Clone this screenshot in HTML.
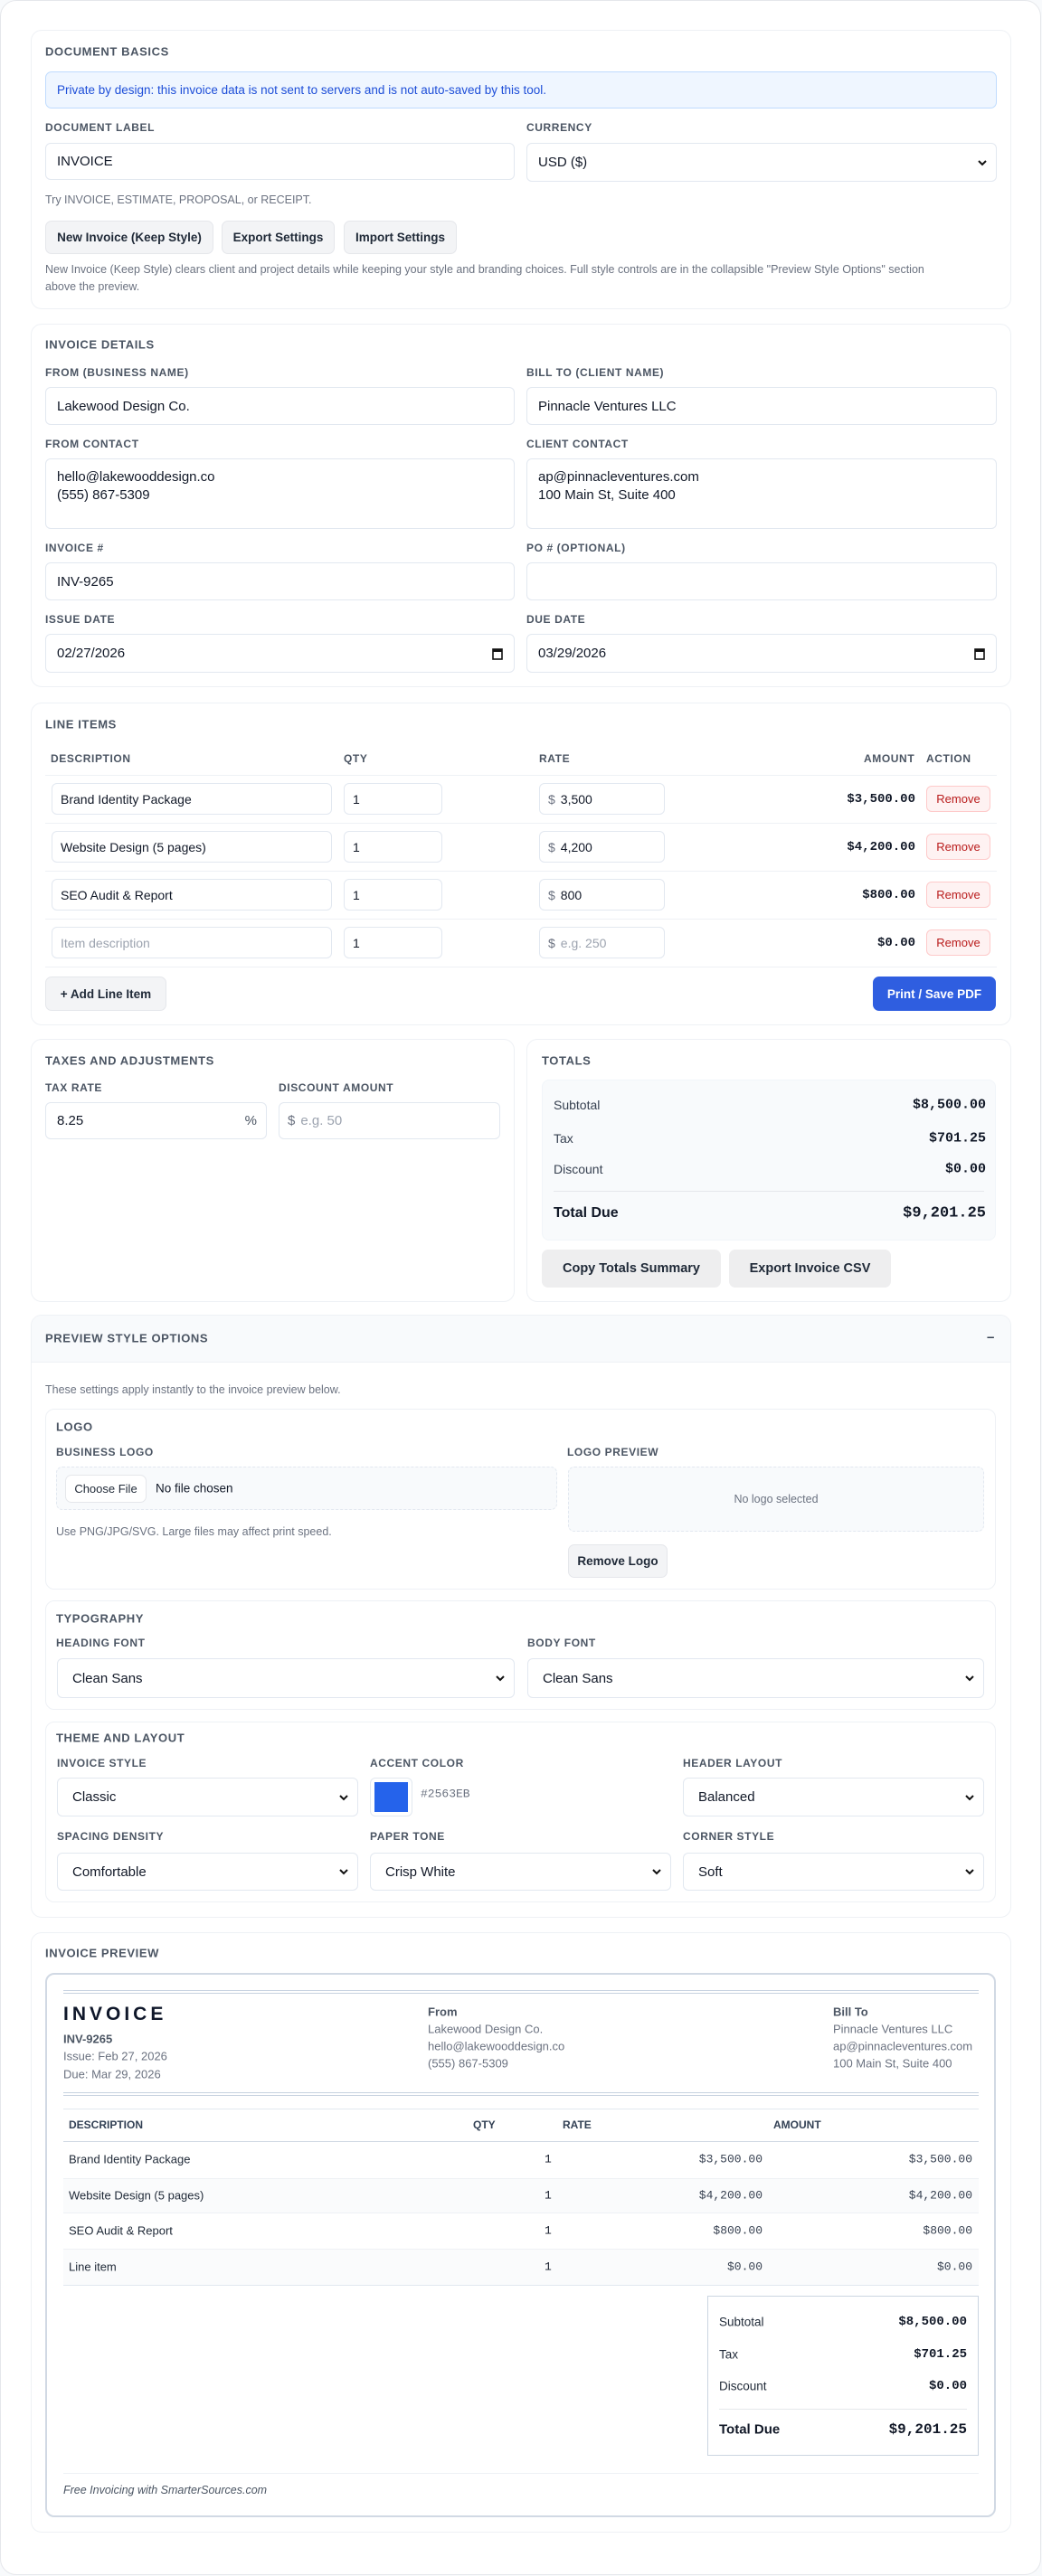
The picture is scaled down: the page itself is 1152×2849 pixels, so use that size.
<!DOCTYPE html>
<html><head><meta charset="utf-8">
<style>
*{box-sizing:border-box}
body{margin:0;width:1152px;height:2849px;background:#f8fafc;font-family:"Liberation Sans",sans-serif;color:#111827;position:relative;overflow:hidden}
.outer{position:absolute;left:0;top:0;width:1151px;height:2848px;background:#fff;border:1px solid #e5e7eb;border-radius:18px}
.card{position:absolute;border:1px solid #eef1f5;border-radius:12px;background:#fff}
.t{position:absolute;font-size:12px;font-weight:700;letter-spacing:.6px;color:#4b5563;transform:translateY(-50%);white-space:nowrap;text-transform:uppercase}
.h{font-size:13px}
.p{position:absolute;font-size:12.5px;color:#6b7280;transform:translateY(-50%);white-space:nowrap}
.in{position:absolute;border:1px solid #e2e8f0;border-radius:6px;display:flex;align-items:center;padding-left:12px;font-size:15px;color:#111827;background:#fff;white-space:nowrap}
.ph{color:#9ca3af}
.btn{position:absolute;border:1px solid #e5e7eb;border-radius:7px;background:#f3f4f6;display:flex;align-items:center;justify-content:center;font-size:13.5px;font-weight:700;color:#1f2937;white-space:nowrap}
.chev{position:absolute;right:10px;top:50%;margin-top:-4px}
.line{position:absolute;height:1px;background:#eef1f5}
.mono{font-family:"Liberation Mono",monospace;font-weight:700}
.r{text-align:right}
.rm{position:absolute;left:1024px;width:71px;height:29px;border:1px solid #fecaca;background:#fef2f2;border-radius:6px;color:#b91c1c;font-size:13px;display:flex;align-items:center;justify-content:center}
.amt{position:absolute;right:140px;font-size:14px;transform:translateY(-50%)}
.dol{color:#6b7280;margin-right:6px}
.tx{position:absolute;transform:translateY(-50%);white-space:nowrap}
</style></head><body>
<div class="outer"></div>

<!-- DOCUMENT BASICS -->
<div class="card" style="left:34px;top:33px;width:1084px;height:309px"></div>
<div class="t h" style="left:50px;top:57px">Document Basics</div>
<div class="a" style="position:absolute;left:50px;top:79px;width:1052px;height:41px;background:#eff6ff;border:1px solid #bfdbfe;border-radius:7px;display:flex;align-items:center;padding-left:12px;font-size:13.5px;color:#1d4ed8">Private by design: this invoice data is not sent to servers and is not auto-saved by this tool.</div>
<div class="t" style="left:50px;top:141px">Document Label</div>
<div class="t" style="left:582px;top:141px">Currency</div>
<div class="in" style="left:50px;top:158px;width:519px;height:41px">INVOICE</div>
<div class="in" style="left:582px;top:158px;width:520px;height:43px">USD ($)<svg class="chev" width="10" height="8" viewBox="0 0 10 8"><path d="M1 2l4 4 4-4" fill="none" stroke="#111" stroke-width="2"/></svg></div>
<div class="p" style="left:50px;top:221px">Try INVOICE, ESTIMATE, PROPOSAL, or RECEIPT.</div>
<div class="btn" style="left:50px;top:244px;width:186px;height:37px">New Invoice (Keep Style)</div>
<div class="btn" style="left:245px;top:244px;width:125px;height:37px">Export Settings</div>
<div class="btn" style="left:380px;top:244px;width:125px;height:37px">Import Settings</div>
<div class="p" style="left:50px;top:298px">New Invoice (Keep Style) clears client and project details while keeping your style and branding choices. Full style controls are in the collapsible "Preview Style Options" section</div>
<div class="p" style="left:50px;top:317px">above the preview.</div>

<!-- INVOICE DETAILS -->
<div class="card" style="left:34px;top:358px;width:1084px;height:402px"></div>
<div class="t h" style="left:50px;top:381px">Invoice Details</div>
<div class="t" style="left:50px;top:412px">From (Business Name)</div>
<div class="t" style="left:582px;top:412px">Bill To (Client Name)</div>
<div class="in" style="left:50px;top:428px;width:519px;height:42px">Lakewood Design Co.</div>
<div class="in" style="left:582px;top:428px;width:520px;height:42px">Pinnacle Ventures LLC</div>
<div class="t" style="left:50px;top:491px">From Contact</div>
<div class="t" style="left:582px;top:491px">Client Contact</div>
<div class="in" style="left:50px;top:507px;width:519px;height:78px;align-items:flex-start;padding-top:10px;line-height:20px;white-space:pre">hello@lakewooddesign.co
(555) 867-5309</div>
<div class="in" style="left:582px;top:507px;width:520px;height:78px;align-items:flex-start;padding-top:10px;line-height:20px;white-space:pre">ap@pinnacleventures.com
100 Main St, Suite 400</div>
<div class="t" style="left:50px;top:606px">Invoice #</div>
<div class="t" style="left:582px;top:606px">PO # (Optional)</div>
<div class="in" style="left:50px;top:622px;width:519px;height:42px">INV-9265</div>
<div class="in" style="left:582px;top:622px;width:520px;height:42px"></div>
<div class="t" style="left:50px;top:685px">Issue Date</div>
<div class="t" style="left:582px;top:685px">Due Date</div>
<div class="in" style="left:50px;top:701px;width:519px;height:43px">02/27/2026<svg class="chev" style="margin-top:-7px;right:12px" width="12" height="14" viewBox="0 0 12 14"><rect x="1" y="2" width="10" height="11" fill="none" stroke="#111" stroke-width="1.6"/><rect x="1" y="2" width="10" height="3" fill="#111"/></svg></div>
<div class="in" style="left:582px;top:701px;width:520px;height:43px">03/29/2026<svg class="chev" style="margin-top:-7px;right:12px" width="12" height="14" viewBox="0 0 12 14"><rect x="1" y="2" width="10" height="11" fill="none" stroke="#111" stroke-width="1.6"/><rect x="1" y="2" width="10" height="3" fill="#111"/></svg></div>

<!-- LINE ITEMS -->
<div class="card" style="left:34px;top:777px;width:1084px;height:357px"></div>
<div class="t h" style="left:50px;top:801px">Line Items</div>
<div class="t" style="left:56px;top:839px">Description</div>
<div class="t" style="left:380px;top:839px">Qty</div>
<div class="t" style="left:596px;top:839px">Rate</div>
<div class="t" style="left:955px;top:839px">Amount</div>
<div class="t" style="left:1024px;top:839px">Action</div>
<div class="line" style="left:50px;top:857px;width:1052px"></div>

<div class="in" style="left:57px;top:866px;width:310px;height:35px;padding-left:9px;font-size:14px">Brand Identity Package</div>
<div class="in" style="left:380px;top:866px;width:109px;height:35px;padding-left:9px;font-size:14px">1</div>
<div class="in" style="left:596px;top:866px;width:139px;height:35px;padding-left:9px;font-size:14px"><span class="dol">$</span>3,500</div>
<div class="amt mono" style="top:884px">$3,500.00</div>
<div class="rm" style="top:869px">Remove</div>
<div class="line" style="left:50px;top:910px;width:1052px"></div>

<div class="in" style="left:57px;top:919px;width:310px;height:35px;padding-left:9px;font-size:14px">Website Design (5 pages)</div>
<div class="in" style="left:380px;top:919px;width:109px;height:35px;padding-left:9px;font-size:14px">1</div>
<div class="in" style="left:596px;top:919px;width:139px;height:35px;padding-left:9px;font-size:14px"><span class="dol">$</span>4,200</div>
<div class="amt mono" style="top:937px">$4,200.00</div>
<div class="rm" style="top:922px">Remove</div>
<div class="line" style="left:50px;top:963px;width:1052px"></div>

<div class="in" style="left:57px;top:972px;width:310px;height:35px;padding-left:9px;font-size:14px">SEO Audit &amp; Report</div>
<div class="in" style="left:380px;top:972px;width:109px;height:35px;padding-left:9px;font-size:14px">1</div>
<div class="in" style="left:596px;top:972px;width:139px;height:35px;padding-left:9px;font-size:14px"><span class="dol">$</span>800</div>
<div class="amt mono" style="top:990px">$800.00</div>
<div class="rm" style="top:975px">Remove</div>
<div class="line" style="left:50px;top:1016px;width:1052px"></div>

<div class="in" style="left:57px;top:1025px;width:310px;height:35px;padding-left:9px;font-size:14px"><span class="ph">Item description</span></div>
<div class="in" style="left:380px;top:1025px;width:109px;height:35px;padding-left:9px;font-size:14px">1</div>
<div class="in" style="left:596px;top:1025px;width:139px;height:35px;padding-left:9px;font-size:14px"><span class="dol">$</span><span class="ph">e.g. 250</span></div>
<div class="amt mono" style="top:1043px">$0.00</div>
<div class="rm" style="top:1028px">Remove</div>
<div class="line" style="left:50px;top:1069px;width:1052px"></div>

<div class="btn" style="left:50px;top:1080px;width:134px;height:38px;font-weight:600">+ Add Line Item</div>
<div class="btn" style="left:965px;top:1080px;width:136px;height:38px;background:#2f5ee0;border-color:#2f5ee0;color:#fff">Print / Save PDF</div>

<!-- TAXES -->
<div class="card" style="left:34px;top:1149px;width:535px;height:291px"></div>
<div class="t h" style="left:50px;top:1173px">Taxes and Adjustments</div>
<div class="t" style="left:50px;top:1203px">Tax Rate</div>
<div class="t" style="left:308px;top:1203px">Discount Amount</div>
<div class="in" style="left:50px;top:1219px;width:245px;height:41px">8.25<span style="position:absolute;right:10px;color:#4b5563">%</span></div>
<div class="in" style="left:308px;top:1219px;width:245px;height:41px;padding-left:9px"><span class="dol">$</span><span class="ph">e.g. 50</span></div>

<!-- TOTALS -->
<div class="card" style="left:582px;top:1149px;width:536px;height:291px"></div>
<div class="t h" style="left:599px;top:1173px">Totals</div>
<div style="position:absolute;left:599px;top:1194px;width:502px;height:178px;background:#f8fafc;border:1px solid #f1f5f9;border-radius:8px"></div>
<div class="tx" style="left:612px;top:1222px;font-size:14px;color:#374151">Subtotal</div>
<div class="tx mono" style="right:62px;top:1222px;font-size:15px">$8,500.00</div>
<div class="tx" style="left:612px;top:1259px;font-size:14px;color:#374151">Tax</div>
<div class="tx mono" style="right:62px;top:1259px;font-size:15px">$701.25</div>
<div class="tx" style="left:612px;top:1293px;font-size:14px;color:#374151">Discount</div>
<div class="tx mono" style="right:62px;top:1293px;font-size:15px">$0.00</div>
<div class="line" style="left:612px;top:1317px;width:476px;background:#e5e7eb"></div>
<div class="tx" style="left:612px;top:1342px;font-size:16px;font-weight:700">Total Due</div>
<div class="tx mono" style="right:62px;top:1342px;font-size:17px">$9,201.25</div>
<div class="btn" style="left:599px;top:1382px;width:198px;height:42px;background:#eeeeef;border:none;font-size:14.5px">Copy Totals Summary</div>
<div class="btn" style="left:806px;top:1382px;width:179px;height:42px;background:#eeeeef;border:none;font-size:14.5px">Export Invoice CSV</div>

<!-- PREVIEW STYLE OPTIONS -->
<div class="card" style="left:34px;top:1454px;width:1084px;height:667px;overflow:hidden"><div style="height:52px;background:#f8fafc;border-bottom:1px solid #eef1f5"></div></div>
<div class="t h" style="left:50px;top:1480px">Preview Style Options</div>
<div class="tx" style="left:1091px;top:1479px;font-size:15px;font-weight:700;color:#374151">–</div>
<div class="p" style="left:50px;top:1537px">These settings apply instantly to the invoice preview below.</div>

<div class="card" style="left:50px;top:1558px;width:1051px;height:200px;border-radius:10px"></div>
<div class="t h" style="left:62px;top:1578px">Logo</div>
<div class="t" style="left:62px;top:1606px">Business Logo</div>
<div class="t" style="left:627px;top:1606px">Logo Preview</div>
<div style="position:absolute;left:62px;top:1622px;width:554px;height:48px;background:#f8fafc;border:1px dashed #e2e8f0;border-radius:7px"></div>
<div class="btn" style="left:72px;top:1631px;width:90px;height:31px;background:#fff;font-weight:400;font-size:13px">Choose File</div>
<div class="tx" style="left:172px;top:1646px;font-size:13.5px">No file chosen</div>
<div style="position:absolute;left:628px;top:1622px;width:460px;height:72px;background:#f8fafc;border:1px dashed #e2e8f0;border-radius:7px;display:flex;align-items:center;justify-content:center;font-size:12.5px;color:#6b7280">No logo selected</div>
<div class="p" style="left:62px;top:1694px">Use PNG/JPG/SVG. Large files may affect print speed.</div>
<div class="btn" style="left:628px;top:1708px;width:110px;height:37px;font-weight:600">Remove Logo</div>

<div class="card" style="left:50px;top:1770px;width:1051px;height:121px;border-radius:10px"></div>
<div class="t h" style="left:62px;top:1790px">Typography</div>
<div class="t" style="left:62px;top:1817px">Heading Font</div>
<div class="t" style="left:583px;top:1817px">Body Font</div>
<div class="in" style="left:63px;top:1834px;width:506px;height:44px;padding-left:16px">Clean Sans<svg class="chev" width="10" height="8" viewBox="0 0 10 8"><path d="M1 2l4 4 4-4" fill="none" stroke="#111" stroke-width="2"/></svg></div>
<div class="in" style="left:583px;top:1834px;width:505px;height:44px;padding-left:16px">Clean Sans<svg class="chev" width="10" height="8" viewBox="0 0 10 8"><path d="M1 2l4 4 4-4" fill="none" stroke="#111" stroke-width="2"/></svg></div>

<div class="card" style="left:50px;top:1904px;width:1051px;height:200px;border-radius:10px"></div>
<div class="t h" style="left:62px;top:1922px">Theme and Layout</div>
<div class="t" style="left:63px;top:1950px">Invoice Style</div>
<div class="t" style="left:409px;top:1950px">Accent Color</div>
<div class="t" style="left:755px;top:1950px">Header Layout</div>
<div class="in" style="left:63px;top:1966px;width:333px;height:43px;padding-left:16px">Classic<svg class="chev" width="10" height="8" viewBox="0 0 10 8"><path d="M1 2l4 4 4-4" fill="none" stroke="#111" stroke-width="2"/></svg></div>
<div style="position:absolute;left:409px;top:1966px;width:47px;height:43px;border:1px solid #e2e8f0;border-radius:6px;background:#fff"><div style="margin:4px;width:37px;height:33px;background:#2563eb"></div></div>
<div class="tx" style="left:465px;top:1984px;font-size:13px;color:#6b7280;font-family:'Liberation Mono',monospace">#2563EB</div>
<div class="in" style="left:755px;top:1966px;width:333px;height:43px;padding-left:16px">Balanced<svg class="chev" width="10" height="8" viewBox="0 0 10 8"><path d="M1 2l4 4 4-4" fill="none" stroke="#111" stroke-width="2"/></svg></div>
<div class="t" style="left:63px;top:2031px">Spacing Density</div>
<div class="t" style="left:409px;top:2031px">Paper Tone</div>
<div class="t" style="left:755px;top:2031px">Corner Style</div>
<div class="in" style="left:63px;top:2049px;width:333px;height:42px;padding-left:16px">Comfortable<svg class="chev" width="10" height="8" viewBox="0 0 10 8"><path d="M1 2l4 4 4-4" fill="none" stroke="#111" stroke-width="2"/></svg></div>
<div class="in" style="left:409px;top:2049px;width:333px;height:42px;padding-left:16px">Crisp White<svg class="chev" width="10" height="8" viewBox="0 0 10 8"><path d="M1 2l4 4 4-4" fill="none" stroke="#111" stroke-width="2"/></svg></div>
<div class="in" style="left:755px;top:2049px;width:333px;height:42px;padding-left:16px">Soft<svg class="chev" width="10" height="8" viewBox="0 0 10 8"><path d="M1 2l4 4 4-4" fill="none" stroke="#111" stroke-width="2"/></svg></div>

<!-- INVOICE PREVIEW -->
<div class="card" style="left:34px;top:2137px;width:1084px;height:664px"></div>
<div class="t h" style="left:50px;top:2160px">Invoice Preview</div>
<div style="position:absolute;left:50px;top:2182px;width:1051px;height:602px;border:2px solid #d1d9e4;border-radius:10px;background:#fff"></div>
<div style="position:absolute;left:70px;top:2201px;width:1012px;height:4px;border-top:1px solid #c7d2e0;border-bottom:1px solid #c7d2e0"></div>
<div class="tx" style="left:70px;top:2228px;font-size:21px;font-weight:700;letter-spacing:4px;color:#0f172a">INVOICE</div>
<div class="tx" style="left:70px;top:2255px;font-size:13px;font-weight:700;color:#4b5563">INV-9265</div>
<div class="tx" style="left:70px;top:2274px;font-size:13px;color:#6b7280">Issue: Feb 27, 2026</div>
<div class="tx" style="left:70px;top:2294px;font-size:13px;color:#6b7280">Due: Mar 29, 2026</div>
<div class="tx" style="left:473px;top:2225px;font-size:13px;font-weight:700;color:#4b5563">From</div>
<div class="tx" style="left:473px;top:2244px;font-size:13px;color:#6b7280">Lakewood Design Co.</div>
<div class="tx" style="left:473px;top:2263px;font-size:13px;color:#6b7280">hello@lakewooddesign.co</div>
<div class="tx" style="left:473px;top:2282px;font-size:13px;color:#6b7280">(555) 867-5309</div>
<div class="tx" style="left:921px;top:2225px;font-size:13px;font-weight:700;color:#4b5563">Bill To</div>
<div class="tx" style="left:921px;top:2244px;font-size:13px;color:#6b7280">Pinnacle Ventures LLC</div>
<div class="tx" style="left:921px;top:2263px;font-size:13px;color:#6b7280">ap@pinnacleventures.com</div>
<div class="tx" style="left:921px;top:2282px;font-size:13px;color:#6b7280">100 Main St, Suite 400</div>
<div style="position:absolute;left:70px;top:2314px;width:1012px;height:4px;border-top:1px solid #c7d2e0;border-bottom:1px solid #c7d2e0"></div>

<div class="line" style="left:70px;top:2332px;width:1012px;background:#e2e8f0"></div>
<div class="tx" style="left:76px;top:2350px;font-size:12px;font-weight:700;color:#334155">DESCRIPTION</div>
<div class="tx" style="left:523px;top:2350px;font-size:12px;font-weight:700;color:#334155">QTY</div>
<div class="tx" style="left:622px;top:2350px;font-size:12px;font-weight:700;color:#334155">RATE</div>
<div class="tx" style="left:855px;top:2350px;font-size:12px;font-weight:700;color:#334155">AMOUNT</div>
<div class="line" style="left:70px;top:2368px;width:1012px;background:#d1d9e4"></div>
<div style="position:absolute;left:70px;top:2409px;width:1012px;height:38px;background:#fafbfc"></div>
<div style="position:absolute;left:70px;top:2487px;width:1012px;height:40px;background:#fafbfc"></div>
<div class="line" style="left:70px;top:2409px;width:1012px"></div>
<div class="line" style="left:70px;top:2447px;width:1012px"></div>
<div class="line" style="left:70px;top:2487px;width:1012px"></div>
<div class="line" style="left:70px;top:2527px;width:1012px;background:#e2e8f0"></div>

<div class="tx" style="left:76px;top:2388px;font-size:13px;color:#1f2937">Brand Identity Package</div>
<div class="tx" style="left:602px;top:2388px;font-size:13px;font-family:'Liberation Mono',monospace">1</div>
<div class="tx" style="right:309px;top:2388px;font-size:13px;font-family:'Liberation Mono',monospace;color:#374151">$3,500.00</div>
<div class="tx" style="right:77px;top:2388px;font-size:13px;font-family:'Liberation Mono',monospace;color:#374151">$3,500.00</div>

<div class="tx" style="left:76px;top:2428px;font-size:13px;color:#1f2937">Website Design (5 pages)</div>
<div class="tx" style="left:602px;top:2428px;font-size:13px;font-family:'Liberation Mono',monospace">1</div>
<div class="tx" style="right:309px;top:2428px;font-size:13px;font-family:'Liberation Mono',monospace;color:#374151">$4,200.00</div>
<div class="tx" style="right:77px;top:2428px;font-size:13px;font-family:'Liberation Mono',monospace;color:#374151">$4,200.00</div>

<div class="tx" style="left:76px;top:2467px;font-size:13px;color:#1f2937">SEO Audit &amp; Report</div>
<div class="tx" style="left:602px;top:2467px;font-size:13px;font-family:'Liberation Mono',monospace">1</div>
<div class="tx" style="right:309px;top:2467px;font-size:13px;font-family:'Liberation Mono',monospace;color:#374151">$800.00</div>
<div class="tx" style="right:77px;top:2467px;font-size:13px;font-family:'Liberation Mono',monospace;color:#374151">$800.00</div>

<div class="tx" style="left:76px;top:2507px;font-size:13px;color:#1f2937">Line item</div>
<div class="tx" style="left:602px;top:2507px;font-size:13px;font-family:'Liberation Mono',monospace">1</div>
<div class="tx" style="right:309px;top:2507px;font-size:13px;font-family:'Liberation Mono',monospace;color:#374151">$0.00</div>
<div class="tx" style="right:77px;top:2507px;font-size:13px;font-family:'Liberation Mono',monospace;color:#374151">$0.00</div>

<div style="position:absolute;left:782px;top:2539px;width:300px;height:177px;border:1px solid #cbd5e1"></div>
<div class="tx" style="left:795px;top:2568px;font-size:13.5px;color:#1f2937">Subtotal</div>
<div class="tx mono" style="right:83px;top:2568px;font-size:14px">$8,500.00</div>
<div class="tx" style="left:795px;top:2604px;font-size:13.5px;color:#1f2937">Tax</div>
<div class="tx mono" style="right:83px;top:2604px;font-size:14px">$701.25</div>
<div class="tx" style="left:795px;top:2639px;font-size:13.5px;color:#1f2937">Discount</div>
<div class="tx mono" style="right:83px;top:2639px;font-size:14px">$0.00</div>
<div class="line" style="left:795px;top:2664px;width:274px;background:#e5e7eb"></div>
<div class="tx" style="left:795px;top:2687px;font-size:15px;font-weight:700">Total Due</div>
<div class="tx mono" style="right:83px;top:2687px;font-size:16px">$9,201.25</div>

<div class="line" style="left:70px;top:2735px;width:1012px"></div>
<div class="tx" style="left:70px;top:2754px;font-size:12.5px;font-style:italic;color:#4b5563">Free Invoicing with SmarterSources.com</div>
</body></html>
